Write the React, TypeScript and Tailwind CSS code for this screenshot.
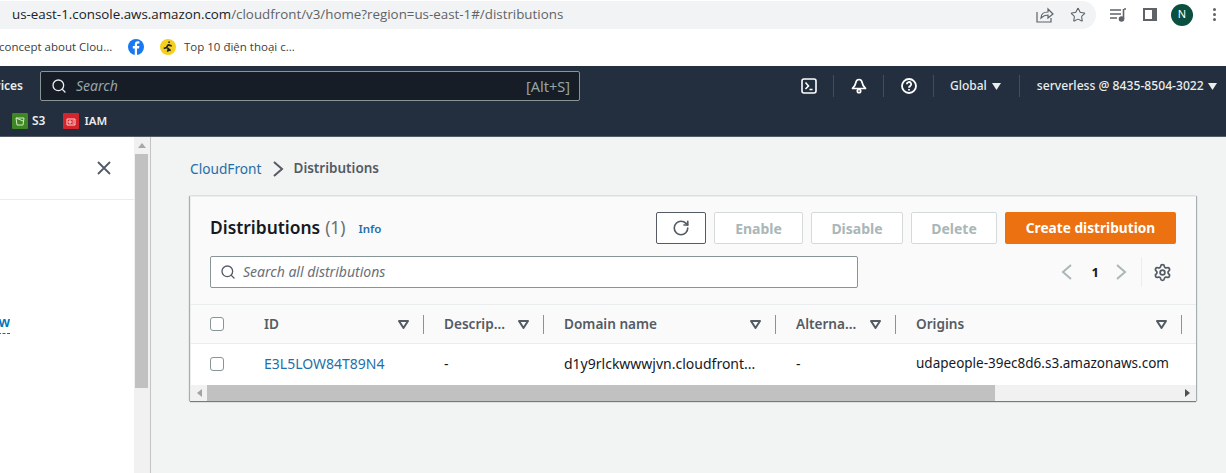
import React from "react";
import { RotateCw, Settings, Search, Star } from "lucide-react";

const ember = { fontFamily: '"Noto Sans", "Open Sans", sans-serif' };

function Tri({ className = "" }: { className?: string }) {
  return (
    <svg width="11" height="9" viewBox="0 0 11 9" className={className}>
      <path d="M1 1h9L5.500 8z" fill="none" stroke="#545b64" strokeWidth="2" strokeLinejoin="round" />
    </svg>
  );
}

function Caret() {
  return (
    <svg width="9" height="7" viewBox="0 0 9 7">
      <path d="M0 0h9L4.500 7z" fill="#eaeded" />
    </svg>
  );
}

function Chevron({ left = false, color, className = "" }: { left?: boolean; color: string; className?: string }) {
  return (
    <svg width="11" height="16" viewBox="0 0 11 16" fill="none" stroke={color} strokeWidth="2" className={className}>
      <path d={left ? "M10 1L2 8l8 7" : "M1 1l8 7-8 7"} />
    </svg>
  );
}

function Check() {
  return <span className="block w-[14px] h-[14px] rounded-[3px] border border-[#879596] bg-white" />;
}

function Sep() {
  return <span className="block w-px h-[22px] bg-[#414d5c]" />;
}

function HeadCell({ w, label, pad = "pl-[20px]" }: { w: string; label: string; pad?: string }) {
  return (
    <div className={`${w} ${pad} shrink-0 h-full flex items-center`}>
      <span className="flex-1 text-[13.6px] font-semibold text-[#545b64] leading-none">{label}</span>
      <Tri className="mr-[14px]" />
      <span className="block w-px h-[19px] bg-[#879596]" />
    </div>
  );
}

function Cell({ w, children, className = "text-[#16191f] text-[14px]" }: { w: string; children: React.ReactNode; className?: string }) {
  return <div className={`${w} pl-[20px] shrink-0 leading-none whitespace-nowrap ${className}`}>{children}</div>;
}

function DisabledBtn({ w, label }: { w: string; label: string }) {
  return (
    <button className={`${w} h-[32px] rounded-[2px] border border-[#d5dbdb] bg-white text-[14px] font-bold text-[#aab7b8]`}>{label}</button>
  );
}

export default function App() {
  return (
    <div className="w-[1226px] h-[473px] overflow-hidden flex flex-col bg-white" style={ember}>
      {/* Browser chrome */}
      <div className="h-[29px] shrink-0 flex items-center bg-white">
        <div className="w-[1096px] h-[28px] bg-[#f1f3f4] rounded-r-[14px] flex items-center pl-[12px] pr-[10px]">
          <span className="flex-1 text-[13.35px] text-[#5f6368] leading-none" style={{ fontFamily: '"Open Sans", sans-serif' }}>
            <span className="text-[#202124]">us-east-1.console.aws.amazon.com</span>/cloudfront/v3/home?region=us-east-1#/distributions
          </span>
          <svg width="18" height="16" viewBox="0 0 18 16" className="mr-[16px]" fill="none" stroke="#5f6368" strokeWidth="1.2">
            <path d="M1 5v10h14v-4" />
            <path d="M5 11c0-4 3-6 7-6V2l5 5-5 4V8c-3 0-5 1-7 3z" />
          </svg>
          <Star size={16} color="#5f6368" strokeWidth={1.6} />
        </div>
        <div className="flex-1 flex items-center pl-[14px]">
          <svg width="16" height="14" viewBox="0 0 16 14" fill="none" stroke="#5f6368" strokeWidth="1.6">
            <path d="M0 2h11M0 6h11M0 10h7" />
            <path d="M14 1h2M13.500 1v10" />
            <circle cx="11.500" cy="11" r="2" fill="#5f6368" />
          </svg>
          <span className="ml-[17px] block w-[14px] h-[13px] border-2 border-[#5f6368] border-r-[5px] bg-white" />
          <span className="ml-[14px] w-[22px] h-[22px] rounded-full bg-[#0a4f3f] text-white text-[11px] flex items-center justify-center">N</span>
          <span className="ml-[20px] flex flex-col gap-[2px]">
            <span className="block w-[3px] h-[3px] rounded-full bg-[#5f6368]" />
            <span className="block w-[3px] h-[3px] rounded-full bg-[#5f6368]" />
            <span className="block w-[3px] h-[3px] rounded-full bg-[#5f6368]" />
          </span>
        </div>
      </div>
      <div className="h-[37px] shrink-0 flex items-center pb-[2px] text-[11.5px] text-[#3c4043] whitespace-nowrap" style={{ fontFamily: '"Open Sans", sans-serif' }}>
        <span className="-ml-[1px] w-[129px]">concept about Clou...</span>
        <svg width="16" height="16" viewBox="0 0 16 16">
          <circle cx="8" cy="8" r="8" fill="#1877f2" />
          <path d="M9 16V9.500h2l.4-2.400H9V5.800c0-.7.300-1.200 1.200-1.200h1.200V2.500c-.5-.1-1.100-.2-1.700-.2C8 2.300 6.800 3.400 6.800 5.400v1.700H4.800v2.400h2V16z" fill="#fff" />
        </svg>
        <svg width="16" height="16" viewBox="0 0 15 15" className="ml-[16px]">
          <circle cx="7.500" cy="7.500" r="7.500" fill="#f4cf1f" />
          <path d="M9 2.500l-1 1M8 5L6 8l2 1-1 3M6 8L3.500 9M8 5.500l3 1M7.500 9l2.500 2" stroke="#222" strokeWidth="1.500" fill="none" />
        </svg>
        <span className="ml-[8px]">Top 10 điện thoại c...</span>
      </div>

      {/* AWS nav */}
      <div className="h-[71px] shrink-0 bg-[#232f3e] border-b border-[#545b64] flex flex-col">
        <div className="h-[40px] shrink-0 flex items-center text-[12px] text-[#eaeded]">
          <span className="w-[40px] pr-[17px] font-semibold shrink-0 overflow-hidden whitespace-nowrap flex justify-end">vices</span>
          <div className="w-[540px] h-[30px] shrink-0 rounded-[2px] border border-[#879596] bg-[#161d26] flex items-center pl-[10px] pr-[9px]">
            <Search size={16} color="#eaeded" strokeWidth={2} />
            <span className="ml-[9px] flex-1 text-[14px] italic text-[#95a5a6] leading-none">Search</span>
            <span className="text-[14.5px] text-[#95a5a6] leading-none">[Alt+S]</span>
          </div>
          <div className="flex items-center ml-[221px] shrink-0">
            <svg width="16" height="16" viewBox="0 0 16 16" fill="none" stroke="#fff" strokeWidth="1.600">
              <rect x="1" y="1" width="14" height="14" rx="2" />
              <path d="M4.500 4.500L7.500 8l-3 3M8.500 11.500h3" />
            </svg>
            <span className="ml-[16px]"><Sep /></span>
            <svg width="16" height="16" viewBox="0 0 16 16" fill="none" stroke="#fff" strokeWidth="1.700" className="ml-[17px]">
              <path d="M8 1.500c-2 0-3 1.500-3.300 3.500-.3 2-1 3.500-3.200 5.500h13c-2.200-2-2.900-3.500-3.200-5.500C11 3 10 1.500 8 1.500z" strokeLinejoin="round" />
              <circle cx="8" cy="13" r="1.700" />
            </svg>
            <span className="ml-[16px]"><Sep /></span>
            <svg width="16" height="16" viewBox="0 0 16 16" fill="none" stroke="#fff" strokeWidth="1.800" className="ml-[17px]">
              <circle cx="8" cy="8" r="7" />
              <path d="M5.800 6.200a2.200 2.200 0 1 1 3.300 1.900c-.7.400-1.100.8-1.100 1.600" />
              <path d="M8 11v1.500" />
            </svg>
            <span className="ml-[16px]"><Sep /></span>
            <span className="ml-[16px] font-medium">Global</span>
            <span className="ml-[5px]"><Caret /></span>
            <span className="ml-[18px]"><Sep /></span>
            <span className="ml-[17px] text-[12.15px] font-medium whitespace-nowrap">serverless @ 8435-8504-3022</span>
            <span className="ml-[4px]"><Caret /></span>
          </div>
        </div>
        <div className="flex-1 flex items-center text-[11.5px] font-semibold text-[#eaeded] pl-[12px] pb-[1px]">
          <span className="w-[16px] h-[16px] rounded-[1px] bg-[#3f8624] flex items-center justify-center">
            <svg width="10" height="10" viewBox="0 0 10 10" fill="none" stroke="#cfeec0" strokeWidth="1">
              <path d="M1 2h8L8 9H2zM1 2l7 3" />
            </svg>
          </span>
          <span className="ml-[4px] text-[12px]">S3</span>
          <span className="ml-[18px] w-[16px] h-[16px] rounded-[1px] bg-[#d6242d] flex items-center justify-center">
            <svg width="10" height="10" viewBox="0 0 10 10" fill="none" stroke="#ffd5d5" strokeWidth="1">
              <path d="M1 3h8v6H1zM3 5h2v2H3zM6.500 5H8M6.500 7H8" />
            </svg>
          </span>
          <span className="ml-[5px]">IAM</span>
        </div>
      </div>

      {/* Body */}
      <div className="flex-1 min-h-0 flex bg-[#f2f3f3]">
        {/* Side panel */}
        <div className="w-[134px] shrink-0 bg-white flex flex-col">
          <div className="h-[63px] shrink-0 border-b border-[#eaeded] flex items-center justify-end pr-[23px]">
            <svg width="14" height="14" viewBox="0 0 14 14" fill="none" stroke="#545b64" strokeWidth="1.800">
              <path d="M1 1l12 12M13 1L1 13" />
            </svg>
          </div>
          <div className="mt-[115px] text-[14px] leading-none font-semibold text-[#0073bb] overflow-hidden w-[10px] flex justify-end">
            <span className="border-b border-dashed border-[#0073bb] pb-[4px]">w</span>
          </div>
        </div>
        <div className="w-[17px] shrink-0 bg-[#f1f1f1] border-r border-[#c4c4c4] flex flex-col">
          <div className="ml-[1px] w-[13px] h-[17px] flex items-center justify-center">
            <svg width="8" height="5" viewBox="0 0 8 5"><path d="M0 5l4-5 4 5z" fill="#a8a8a8" /></svg>
          </div>
          <div className="ml-[1px] w-[13px] h-[234px] bg-[#c1c1c1]" />
        </div>

        {/* Content */}
        <div className="flex-1 min-w-0 pl-[39px] pt-[22px]">
          <div className="h-[18px] flex items-center leading-none pt-[2px]">
            <span className="text-[13.7px] text-[#1f6fa8]">CloudFront</span>
            <Chevron color="#545b64" className="ml-[11px] mr-[10px]" />
            <span className="text-[13.5px] font-semibold text-[#545b64]">Distributions</span>
          </div>
          <div className="mt-[19px] w-[1006px] h-[205px] bg-white border-l border-t border-[#eaeded] shadow-[0_1px_1px_0_rgba(0,28,36,0.5),1px_0_1px_0_rgba(0,28,36,0.25),-1px_0_1px_0_rgba(0,28,36,0.25)] flex flex-col">
            <div className="h-[108px] shrink-0 bg-[#fafafa] border-b border-[#eaeded] flex flex-col pl-[19px] pr-[20px] pt-[15px]">
              <div className="h-[32px] flex items-center">
                <span className="text-[17.4px] font-semibold text-[#16191f] leading-none">Distributions</span>
                <span className="ml-[5px] text-[17.4px] text-[#687078] leading-none">(1)</span>
                <span className="ml-[13px] text-[11.5px] font-semibold text-[#1f6fa8] leading-none mt-[2px]">Info</span>
                <div className="ml-auto flex items-center gap-[8px]">
                  <button className="w-[50px] h-[32px] rounded-[2px] border border-[#545b64] bg-white flex items-center justify-center">
                    <RotateCw size={18} color="#545b64" strokeWidth={2.2} />
                  </button>
                  <DisabledBtn w="w-[89px]" label="Enable" />
                  <DisabledBtn w="w-[92px]" label="Disable" />
                  <DisabledBtn w="w-[86px]" label="Delete" />
                  <button className="w-[171px] h-[32px] rounded-[2px] bg-[#ec7211] text-[13.7px] font-bold text-white">Create distribution</button>
                </div>
              </div>
              <div className="mt-[12px] h-[32px] flex items-center">
                <div className="w-[648px] h-[32px] rounded-[2px] border border-[#879596] bg-white flex items-center pl-[9px]">
                  <Search size={16} color="#545b64" strokeWidth={2} />
                  <span className="ml-[7px] text-[14px] italic text-[#687078] leading-none">Search all distributions</span>
                </div>
                <div className="ml-auto flex items-center">
                  <Chevron left color="#aab7b8" />
                  <span className="ml-[20px] text-[13px] font-bold text-[#16191f] leading-none">1</span>
                  <Chevron color="#aab7b8" className="ml-[17px]" />
                  <span className="ml-[14px] block w-px h-[30px] bg-[#eaeded]" />
                  <Settings size={19} color="#545b64" strokeWidth={2.2} className="ml-[11px] mr-[4px]" />
                </div>
              </div>
            </div>
            <div className="h-[39px] shrink-0 bg-[#fafafa] border-b border-[#eaeded] flex items-center">
              <div className="w-[56px] shrink-0 pl-[19px] h-full flex items-center"><Check /></div>
              <HeadCell w="w-[177px]" label="ID" pad="pl-[17px]" />
              <HeadCell w="w-[120px]" label="Descrip..." />
              <HeadCell w="w-[232px]" label="Domain name" />
              <HeadCell w="w-[120px]" label="Alterna..." />
              <HeadCell w="w-[286px]" label="Origins" />
            </div>
            <div className="h-[41px] shrink-0 flex items-center pb-[2px] overflow-hidden">
              <div className="w-[56px] shrink-0 pl-[19px]"><Check /></div>
              <Cell w="w-[177px] !pl-[17px]" className="text-[#1f6fa8] text-[14px]">E3L5LOW84T89N4</Cell>
              <Cell w="w-[120px]">-</Cell>
              <Cell w="w-[232px]">d1y9rlckwwwjvn.cloudfront...</Cell>
              <Cell w="w-[120px]">-</Cell>
              <Cell w="w-[280px]" className="text-[#16191f] text-[13.5px]">udapeople-39ec8d6.s3.amazonaws.com</Cell>
            </div>
            <div className="h-[16px] shrink-0 bg-[#f1f1f1] flex items-center">
              <div className="w-[16px] h-full flex items-center justify-center">
                <svg width="5" height="8" viewBox="0 0 5 8"><path d="M5 0L0 4l5 4z" fill="#a3a3a3" /></svg>
              </div>
              <div className="w-[788px] h-full bg-[#c1c1c1]" />
              <div className="flex-1" />
              <div className="w-[17px] h-full flex items-center justify-center">
                <svg width="5" height="8" viewBox="0 0 5 8"><path d="M0 0l5 4-5 4z" fill="#505050" /></svg>
              </div>
            </div>
          </div>
        </div>
      </div>
    </div>
  );
}
